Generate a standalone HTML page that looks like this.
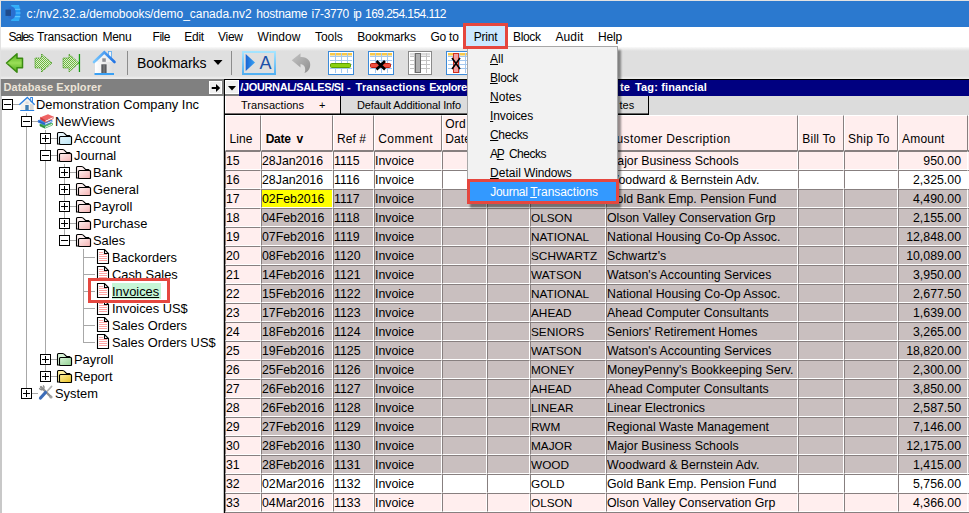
<!DOCTYPE html>
<html><head><meta charset="utf-8"><title>NewViews</title>
<style>
html,body{margin:0;padding:0;}
body{width:969px;height:513px;overflow:hidden;position:relative;background:#fff;font-family:"Liberation Sans",Arial,sans-serif;font-size:12.3px;color:#000;}
.a{position:absolute;white-space:nowrap;}
.c{position:absolute;box-sizing:border-box;font-size:12.33px;line-height:17px;height:19px;white-space:nowrap;overflow:hidden;border-top:1px solid #877f7f;border-left:1px solid #877f7f;border-bottom:1px solid #fff;border-right:1px solid #fff;padding-left:0;padding-top:1px;}
.h{position:absolute;box-sizing:border-box;background:#ffeeee;border-left:1px solid #fff;border-top:1px solid #fff;border-right:1px solid #877f7f;border-bottom:1px solid #877f7f;}
u{text-decoration:underline;}
</style></head><body>

<div class="a" style="left:0;top:0;width:1px;height:79px;background:#e2e2e2;"></div>
<div class="a" style="left:0;top:0;width:969px;height:1px;background:#e2e2e2;"></div>
<div class="a" style="left:1px;top:1px;width:968px;height:26px;background:#2b79cf;"></div>
<div class="a" style="left:26.6px;top:7px;font-size:12px;line-height:15px;letter-spacing:0.054px;color:#fff;">c:/nv2.32.a/</div>
<div class="a" style="left:89.3px;top:7px;font-size:12px;line-height:15px;letter-spacing:-0.116px;color:#fff;">demobooks</div>
<div class="a" style="left:150px;top:7px;font-size:12px;line-height:15px;letter-spacing:-0.030px;color:#fff;">/demo_canada.nv2</div>
<div class="a" style="left:256.3px;top:7px;font-size:12px;line-height:15px;letter-spacing:-0.213px;color:#fff;">hostname</div>
<div class="a" style="left:311.4px;top:7px;font-size:12px;line-height:15px;letter-spacing:-0.362px;color:#fff;">i7-3770</div>
<div class="a" style="left:353.2px;top:7px;font-size:12px;line-height:15px;letter-spacing:-0.922px;color:#fff;">ip</div>
<div class="a" style="left:365px;top:7px;font-size:12px;line-height:15px;letter-spacing:-0.547px;color:#fff;">169.254.154.112</div>
<svg class="a" style="left:4px;top:4px" width="19" height="19" viewBox="4 4 19 19"><defs><linearGradient id="ti" x1="0" y1="0" x2="0" y2="1"><stop offset="0" stop-color="#38b4fa"/><stop offset="0.5" stop-color="#1c8ff0"/><stop offset="1" stop-color="#34b0f8"/></linearGradient></defs><path d="M11 5 H19 Q21.5 13 19 21 H11 Q15 13 11 5 Z" fill="url(#ti)"/><path d="M13.500 9.300 H20.300 M14 13 H20.600 M13.500 16.700 H20.300" stroke="#5cc4ff" stroke-width="1.200"/><ellipse cx="11.500" cy="12.800" rx="4.200" ry="6.300" fill="#2a6fd0"/><rect x="5.500" y="9.600" width="5.500" height="6.300" fill="#1f4b8c"/></svg>
<div class="a" style="left:1px;top:27px;width:968px;height:20px;background:#fff;"></div>
<div class="a" style="left:463px;top:23px;width:45px;height:26px;box-sizing:border-box;border:3px solid #e5473f;background:#cce8ff;z-index:30"></div>
<div class="a" style="left:8.6px;top:30px;font-size:12px;line-height:14px;letter-spacing:-1.126px;">Sales</div>
<div class="a" style="left:37px;top:30px;font-size:12px;line-height:14px;letter-spacing:-0.168px;">Transaction</div>
<div class="a" style="left:102.4px;top:30px;font-size:12px;line-height:14px;letter-spacing:-0.258px;">Menu</div>
<div class="a" style="left:152.6px;top:30px;font-size:12px;line-height:14px;letter-spacing:-0.486px;">File</div>
<div class="a" style="left:184.3px;top:30px;font-size:12px;line-height:14px;letter-spacing:-0.297px;">Edit</div>
<div class="a" style="left:218px;top:30px;font-size:12px;line-height:14px;letter-spacing:-0.274px;">View</div>
<div class="a" style="left:257.6px;top:30px;font-size:12px;line-height:14px;letter-spacing:0.035px;">Window</div>
<div class="a" style="left:315px;top:30px;font-size:12px;line-height:14px;letter-spacing:-0.043px;">Tools</div>
<div class="a" style="left:357.2px;top:30px;font-size:12px;line-height:14px;letter-spacing:-0.159px;">Bookmarks</div>
<div class="a" style="left:430.5px;top:30px;font-size:12px;line-height:14px;letter-spacing:-0.252px;">Go to</div>
<div class="a" style="left:473.7px;top:30px;font-size:12px;line-height:14px;letter-spacing:-0.177px;z-index:31;">Print</div>
<div class="a" style="left:513px;top:30px;font-size:12px;line-height:14px;letter-spacing:-0.329px;">Block</div>
<div class="a" style="left:555.4px;top:30px;font-size:12px;line-height:14px;letter-spacing:0.148px;">Audit</div>
<div class="a" style="left:598px;top:30px;font-size:12px;line-height:14px;letter-spacing:-0.172px;">Help</div>
<div class="a" style="left:1px;top:47px;width:968px;height:32px;background:linear-gradient(#fafafa 0,#dfdfdf 4px,#dfdfdf 29px,#ececec 31px);"></div>
<svg class="a" style="left:0;top:46px" width="480" height="33" viewBox="0 46 480 33">
<defs><linearGradient id="ga" x1="0" y1="0" x2="0" y2="1"><stop offset="0" stop-color="#52b018"/><stop offset="0.5" stop-color="#9ade58"/><stop offset="1" stop-color="#4aa814"/></linearGradient><linearGradient id="gh" x1="0" y1="0" x2="1" y2="0"><stop offset="0" stop-color="#ffffff"/><stop offset="1" stop-color="#dcdcdc"/></linearGradient><linearGradient id="gr" x1="0" y1="0" x2="1" y2="0"><stop offset="0" stop-color="#78c8ff"/><stop offset="1" stop-color="#2274e4"/></linearGradient><linearGradient id="gb" x1="0" y1="0" x2="0" y2="1"><stop offset="0" stop-color="#a4e4ff"/><stop offset="1" stop-color="#52b0f2"/></linearGradient><linearGradient id="gt" x1="0" y1="0" x2="1" y2="0"><stop offset="0" stop-color="#1864d4"/><stop offset="1" stop-color="#3aa4f4"/></linearGradient><linearGradient id="gu" x1="0" y1="0" x2="1" y2="1"><stop offset="0" stop-color="#c4c4c4"/><stop offset="1" stop-color="#8e8e8e"/></linearGradient><pattern id="dots" width="2" height="2" patternUnits="userSpaceOnUse"><rect width="2" height="2" fill="#deecd2"/><rect width="1" height="1" fill="#6cba3c"/><rect x="1" y="1" width="1" height="1" fill="#6cba3c"/></pattern></defs>
<path d="M6.5 63 L17 53.800 V58.300 H22.500 V67.700 H17 V72.200 Z" fill="url(#ga)" stroke="#3a8a12" stroke-width="1.5" stroke-linejoin="round"/>
<path d="M52 63 L41.500 54 V58 H35 V68 H41.500 V72 Z" fill="url(#dots)" stroke="#3c9414" stroke-width="1" stroke-dasharray="1 1"/>
<path d="M79 63 L69 54 V58 H63 V68 H69 V72 Z" fill="url(#dots)" stroke="#3c9414" stroke-width="1" stroke-dasharray="1 1"/>
<rect x="78.800" y="54" width="1.3" height="18" fill="#159a10"/>
<rect x="108.500" y="51.500" width="3" height="8" fill="#f0f4f8" stroke="#58a8f0" stroke-width="0.8"/>
<rect x="95" y="61" width="18.500" height="12.500" fill="url(#gh)"/>
<rect x="94.500" y="73" width="19.500" height="2" fill="#3aa0f4"/>
<path d="M96 62 L104.3 53.500 L112.500 62 Z" fill="#f2f2f2"/>
<path d="M94 62 L104.300 52.300 L114.500 62" fill="none" stroke="url(#gr)" stroke-width="2.6" stroke-linejoin="miter" stroke-linecap="round"/>
<rect x="102.300" y="58.300" width="3.500" height="3.500" fill="#8e9096"/>
<rect x="101.300" y="64.300" width="5.300" height="8.700" fill="#5a5c60"/>
<rect x="103.500" y="64.300" width="1" height="8.700" fill="#8a8a8a"/>
<rect x="127" y="51" width="1" height="24" fill="#8c8c8c"/>
<path d="M213.5 60 H222.5 L218 65 Z" fill="#000"/>
<rect x="231" y="51" width="1" height="24" fill="#8c8c8c"/>
<rect x="243" y="52" width="32" height="22" fill="none" stroke="url(#gb)" stroke-width="2"/>
<path d="M245.700 54 L255 62.500 L245.700 71 Z" fill="url(#gt)"/>
<path d="M291.700 60.200 L300.500 53.200 V57 C307 56.500 311.500 61 310 67 C309 70.500 307 72 304.500 73 C306 70 305.500 64.500 300.500 64 V67.500 Z" fill="url(#gu)"/>
</svg>
<div class="a" style="left:137px;top:54px;font-size:14px;line-height:18px;letter-spacing:-0.059px;">Bookmarks</div>
<div class="a" style="left:259.5px;top:52.5px;font-size:18px;line-height:20px;color:#1c50a8;">A</div>
<svg class="a" style="left:328px;top:51px" width="26" height="24" viewBox="0 0 26 24"><rect x="0.5" y="0.5" width="25" height="23" fill="#fff" stroke="#3b8ad8" stroke-width="1"/><rect x="2" y="2" width="22" height="2.500" fill="#f8c848"/><path d="M2 5.5 H24" stroke="#a4c8ee" stroke-width="1"/><path d="M2 9.5 H24" stroke="#a4c8ee" stroke-width="1"/><path d="M2 13.5 H24" stroke="#a4c8ee" stroke-width="1"/><path d="M2 17.5 H24" stroke="#a4c8ee" stroke-width="1"/><path d="M7.5 2 V22" stroke="#a4c8ee" stroke-width="1"/><path d="M13.5 2 V22" stroke="#a4c8ee" stroke-width="1"/><path d="M19.5 2 V22" stroke="#a4c8ee" stroke-width="1"/><rect x="2.5" y="12.5" width="20" height="4" rx="1" fill="#8cd010" stroke="#5ca000" stroke-width="1"/></svg>
<svg class="a" style="left:368px;top:51px" width="26" height="24" viewBox="0 0 26 24"><rect x="0.5" y="0.5" width="25" height="23" fill="#fff" stroke="#3b8ad8" stroke-width="1"/><rect x="2" y="2" width="22" height="2.500" fill="#f8c848"/><path d="M2 5.5 H24" stroke="#a4c8ee" stroke-width="1"/><path d="M2 9.5 H24" stroke="#a4c8ee" stroke-width="1"/><path d="M2 13.5 H24" stroke="#a4c8ee" stroke-width="1"/><path d="M2 17.5 H24" stroke="#a4c8ee" stroke-width="1"/><path d="M7.5 2 V22" stroke="#a4c8ee" stroke-width="1"/><path d="M13.5 2 V22" stroke="#a4c8ee" stroke-width="1"/><path d="M19.5 2 V22" stroke="#a4c8ee" stroke-width="1"/><rect x="2.5" y="12.5" width="20" height="4" rx="1" fill="#f05040" stroke="#c02010" stroke-width="1"/><path d="M8.500 10 L17 18.500 M17 10 L8.500 18.500" stroke="#000" stroke-width="2.6"/></svg>
<svg class="a" style="left:408px;top:51px" width="24" height="24" viewBox="0 0 24 24"><rect x="0.5" y="0.5" width="23" height="23" fill="#fff" stroke="#8a8a8a" stroke-width="1"/><rect x="2" y="2" width="20" height="2.500" fill="#dcdcdc"/><path d="M2 5.5 H22" stroke="#c4c4c4" stroke-width="1"/><path d="M2 9.5 H22" stroke="#c4c4c4" stroke-width="1"/><path d="M2 13.5 H22" stroke="#c4c4c4" stroke-width="1"/><path d="M2 17.5 H22" stroke="#c4c4c4" stroke-width="1"/><path d="M6.5 2 V22" stroke="#c4c4c4" stroke-width="1"/><path d="M12.5 2 V22" stroke="#c4c4c4" stroke-width="1"/><path d="M18.5 2 V22" stroke="#c4c4c4" stroke-width="1"/><rect x="7.500" y="2.500" width="5" height="19" fill="#b0b0b0" stroke="#6a6a6a" stroke-width="1"/></svg>
<svg class="a" style="left:446px;top:51px" width="26" height="24" viewBox="0 0 26 24"><rect x="0.5" y="0.5" width="25" height="23" fill="#fff" stroke="#3b8ad8" stroke-width="1"/><rect x="2" y="2" width="22" height="2.500" fill="#f8c848"/><path d="M2 5.5 H24" stroke="#a4c8ee" stroke-width="1"/><path d="M2 9.5 H24" stroke="#a4c8ee" stroke-width="1"/><path d="M2 13.5 H24" stroke="#a4c8ee" stroke-width="1"/><path d="M2 17.5 H24" stroke="#a4c8ee" stroke-width="1"/><path d="M7.5 2 V22" stroke="#a4c8ee" stroke-width="1"/><path d="M13.5 2 V22" stroke="#a4c8ee" stroke-width="1"/><path d="M19.5 2 V22" stroke="#a4c8ee" stroke-width="1"/><rect x="7.500" y="2.500" width="5" height="19" fill="#f0a0a0" stroke="#d03020" stroke-width="1"/><path d="M6 7 L14 18 M14 7 L6 18" stroke="#000" stroke-width="1.6"/></svg>
<div class="a" style="left:0;top:79px;width:2px;height:434px;background:#c8c8c8;"></div>
<div class="a" style="left:1px;top:79px;width:222px;height:17px;background:#808080;"></div>
<div class="a" style="left:3.5px;top:81px;font-size:11px;line-height:13px;letter-spacing:0.088px;color:#ece4d8;font-weight:bold;">Database Explorer</div>
<div class="a" style="left:209px;top:81px;width:13px;height:13px;background:#f0f0f0;box-sizing:border-box;border:1px solid #fff;"></div>
<svg class="a" style="left:209px;top:81px" width="13" height="13" viewBox="0 0 13 13"><path d="M2.700 7 H8" stroke="#000" stroke-width="2"/><path d="M7 3 L11.200 7 L7 11 Z" fill="#000"/></svg>
<div class="a" style="left:222px;top:79px;width:2px;height:17px;background:#808080;"></div>
<div class="a" style="left:223px;top:96px;width:1px;height:417px;background:#c4c4c4;"></div>
<div class="a" style="left:224px;top:79px;width:1px;height:434px;background:#000;"></div>
<svg class="a" style="left:0;top:96px" width="222" height="417" viewBox="0 0 222 417" shape-rendering="crispEdges"><rect x="26" y="17" width="1" height="281" fill="#a8a8a8"/><rect x="45" y="34" width="1" height="247" fill="#a8a8a8"/><rect x="64" y="68" width="1" height="77" fill="#a8a8a8"/><rect x="83" y="153" width="1" height="94" fill="#a8a8a8"/><rect x="7" y="8" width="12" height="1" fill="#a8a8a8"/><rect x="2.5" y="3.5" width="10" height="10" fill="#fff" stroke="#000" stroke-width="1"/><rect x="4" y="8" width="7" height="1" fill="#000"/><rect x="26" y="25" width="12" height="1" fill="#a8a8a8"/><rect x="21.5" y="20.5" width="10" height="10" fill="#fff" stroke="#000" stroke-width="1"/><rect x="23" y="25" width="7" height="1" fill="#000"/><rect x="45" y="42" width="12" height="1" fill="#a8a8a8"/><rect x="40.5" y="37.5" width="10" height="10" fill="#fff" stroke="#000" stroke-width="1"/><rect x="42" y="42" width="7" height="1" fill="#000"/><rect x="45" y="39" width="1" height="7" fill="#000"/><rect x="45" y="59" width="12" height="1" fill="#a8a8a8"/><rect x="40.5" y="54.5" width="10" height="10" fill="#fff" stroke="#000" stroke-width="1"/><rect x="42" y="59" width="7" height="1" fill="#000"/><rect x="64" y="76" width="12" height="1" fill="#a8a8a8"/><rect x="59.5" y="71.5" width="10" height="10" fill="#fff" stroke="#000" stroke-width="1"/><rect x="61" y="76" width="7" height="1" fill="#000"/><rect x="64" y="73" width="1" height="7" fill="#000"/><rect x="64" y="93" width="12" height="1" fill="#a8a8a8"/><rect x="59.5" y="88.5" width="10" height="10" fill="#fff" stroke="#000" stroke-width="1"/><rect x="61" y="93" width="7" height="1" fill="#000"/><rect x="64" y="90" width="1" height="7" fill="#000"/><rect x="64" y="110" width="12" height="1" fill="#a8a8a8"/><rect x="59.5" y="105.5" width="10" height="10" fill="#fff" stroke="#000" stroke-width="1"/><rect x="61" y="110" width="7" height="1" fill="#000"/><rect x="64" y="107" width="1" height="7" fill="#000"/><rect x="64" y="127" width="12" height="1" fill="#a8a8a8"/><rect x="59.5" y="122.5" width="10" height="10" fill="#fff" stroke="#000" stroke-width="1"/><rect x="61" y="127" width="7" height="1" fill="#000"/><rect x="64" y="124" width="1" height="7" fill="#000"/><rect x="64" y="144" width="12" height="1" fill="#a8a8a8"/><rect x="59.5" y="139.5" width="10" height="10" fill="#fff" stroke="#000" stroke-width="1"/><rect x="61" y="144" width="7" height="1" fill="#000"/><rect x="83" y="161" width="12" height="1" fill="#a8a8a8"/><rect x="83" y="178" width="12" height="1" fill="#a8a8a8"/><rect x="83" y="195" width="12" height="1" fill="#a8a8a8"/><rect x="83" y="212" width="12" height="1" fill="#a8a8a8"/><rect x="83" y="229" width="12" height="1" fill="#a8a8a8"/><rect x="83" y="246" width="12" height="1" fill="#a8a8a8"/><rect x="45" y="263" width="12" height="1" fill="#a8a8a8"/><rect x="40.5" y="258.5" width="10" height="10" fill="#fff" stroke="#000" stroke-width="1"/><rect x="42" y="263" width="7" height="1" fill="#000"/><rect x="45" y="260" width="1" height="7" fill="#000"/><rect x="45" y="280" width="12" height="1" fill="#a8a8a8"/><rect x="40.5" y="275.5" width="10" height="10" fill="#fff" stroke="#000" stroke-width="1"/><rect x="42" y="280" width="7" height="1" fill="#000"/><rect x="45" y="277" width="1" height="7" fill="#000"/><rect x="26" y="297" width="12" height="1" fill="#a8a8a8"/><rect x="21.5" y="292.5" width="10" height="10" fill="#fff" stroke="#000" stroke-width="1"/><rect x="23" y="297" width="7" height="1" fill="#000"/><rect x="26" y="294" width="1" height="7" fill="#000"/></svg>
<svg class="a" style="left:18px;top:96px" width="18" height="16" viewBox="18 96 18 16"><rect x="30.700" y="97.500" width="1.800" height="4.500" fill="#fff" stroke="#2a80e0" stroke-width="0.900"/><path d="M20.700 104.500 L27.300 98.500 L33.600 104.500 V110 H20.700 Z" fill="#f4f2ee"/><path d="M30 104 V110 H33.600 V104.500 Z" fill="#d8d8d8"/><path d="M19.300 104.700 L27.300 97.400 L34.700 104.700" fill="none" stroke="#2a80e0" stroke-width="1.300" stroke-linejoin="miter"/><rect x="25.300" y="105" width="3.400" height="5" fill="#3f7fb4"/><rect x="25.600" y="101.500" width="3" height="2.300" fill="#dcdcdc"/><rect x="20.200" y="110" width="14" height="1" fill="#2a80e0"/></svg>
<div class="a" style="left:36px;top:96px;font-size:12.86px;line-height:17px;">Demonstration Company Inc</div>
<svg class="a" style="left:37px;top:113px" width="18" height="16" viewBox="37 113 18 16"><path d="M40 124 L45 126.500 L52.500 123.300 V125 L45 128.200 L40 126 Z" fill="#fff" stroke="#38a848" stroke-width="0.700"/><path d="M40 124 L47 121.500 L52.500 123.300 L45 126.500 Z" fill="#44b858"/><path d="M40 124 L45 126.500 V128.200 L40 126 Z" fill="#2c9040"/><path d="M38.300 120.300 L45 123.300 L52 120.300 V122 L45 125 L38.300 122.300 Z" fill="#fff" stroke="#2a70d8" stroke-width="0.700"/><path d="M38.300 120.300 L45 117.500 L52 120.300 L45 123.300 Z" fill="#3a84e8"/><path d="M38.300 120.300 L45 123.300 V125 L38.300 122.300 Z" fill="#2464c8"/><path d="M40.500 117.300 L45.500 120.300 L53.200 116.600 V118.600 L45.500 122.300 L40.500 119.300 Z" fill="#fff" stroke="#d84040" stroke-width="0.700"/><path d="M40.500 117.300 L48 114.300 L53.200 116.600 L45.500 120.300 Z" fill="#f06464"/><path d="M40.500 117.300 L45.500 120.300 V122.300 L40.500 119.300 Z" fill="#d03838"/></svg>
<div class="a" style="left:55px;top:113px;font-size:12.86px;line-height:17px;">NewViews</div>
<svg class="a" style="left:56px;top:131px" width="17" height="15" viewBox="0 0 17 15"><defs><linearGradient id="g2" x1="0" y1="0" x2="1" y2="1"><stop offset="0" stop-color="#e8f8ff"/><stop offset="1" stop-color="#b8e4f4"/></linearGradient></defs><path d="M1.5 13 V2.5 Q1.5 1.5 2.5 1.5 H6.5 Q8 1.5 9 3 L10.5 4.500 H13.500 L15.500 6.500 V13 Z" fill="#e8f8ff" stroke="#000" stroke-width="1.1"/><rect x="3.5" y="5.5" width="12" height="8" rx="1" fill="url(#g2)" stroke="#000" stroke-width="1.1"/></svg>
<div class="a" style="left:74px;top:130px;font-size:12.86px;line-height:17px;">Account</div>
<svg class="a" style="left:56px;top:148px" width="17" height="15" viewBox="0 0 17 15"><defs><linearGradient id="g3" x1="0" y1="0" x2="1" y2="1"><stop offset="0" stop-color="#fff0f0"/><stop offset="1" stop-color="#f4b0b0"/></linearGradient></defs><path d="M1.5 13 V2.5 Q1.5 1.5 2.5 1.5 H6.5 Q8 1.5 9 3 L10.5 4.500 H13.500 L15.500 6.500 V13 Z" fill="#fff0f0" stroke="#000" stroke-width="1.1"/><rect x="3.5" y="5.5" width="12" height="8" rx="1" fill="url(#g3)" stroke="#000" stroke-width="1.1"/></svg>
<div class="a" style="left:74px;top:147px;font-size:12.86px;line-height:17px;">Journal</div>
<svg class="a" style="left:75px;top:165px" width="17" height="15" viewBox="0 0 17 15"><defs><linearGradient id="g4" x1="0" y1="0" x2="1" y2="1"><stop offset="0" stop-color="#fff0f0"/><stop offset="1" stop-color="#f4b0b0"/></linearGradient></defs><path d="M1.5 13 V2.5 Q1.5 1.5 2.5 1.5 H6.5 Q8 1.5 9 3 L10.5 4.500 H13.500 L15.500 6.500 V13 Z" fill="#fff0f0" stroke="#000" stroke-width="1.1"/><rect x="3.5" y="5.5" width="12" height="8" rx="1" fill="url(#g4)" stroke="#000" stroke-width="1.1"/></svg>
<div class="a" style="left:93px;top:164px;font-size:12.86px;line-height:17px;">Bank</div>
<svg class="a" style="left:75px;top:182px" width="17" height="15" viewBox="0 0 17 15"><defs><linearGradient id="g5" x1="0" y1="0" x2="1" y2="1"><stop offset="0" stop-color="#fff0f0"/><stop offset="1" stop-color="#f4b0b0"/></linearGradient></defs><path d="M1.5 13 V2.5 Q1.5 1.5 2.5 1.5 H6.5 Q8 1.5 9 3 L10.5 4.500 H13.500 L15.500 6.500 V13 Z" fill="#fff0f0" stroke="#000" stroke-width="1.1"/><rect x="3.5" y="5.5" width="12" height="8" rx="1" fill="url(#g5)" stroke="#000" stroke-width="1.1"/></svg>
<div class="a" style="left:93px;top:181px;font-size:12.86px;line-height:17px;">General</div>
<svg class="a" style="left:75px;top:199px" width="17" height="15" viewBox="0 0 17 15"><defs><linearGradient id="g6" x1="0" y1="0" x2="1" y2="1"><stop offset="0" stop-color="#fff0f0"/><stop offset="1" stop-color="#f4b0b0"/></linearGradient></defs><path d="M1.5 13 V2.5 Q1.5 1.5 2.5 1.5 H6.5 Q8 1.5 9 3 L10.5 4.500 H13.500 L15.500 6.500 V13 Z" fill="#fff0f0" stroke="#000" stroke-width="1.1"/><rect x="3.5" y="5.5" width="12" height="8" rx="1" fill="url(#g6)" stroke="#000" stroke-width="1.1"/></svg>
<div class="a" style="left:93px;top:198px;font-size:12.86px;line-height:17px;">Payroll</div>
<svg class="a" style="left:75px;top:216px" width="17" height="15" viewBox="0 0 17 15"><defs><linearGradient id="g7" x1="0" y1="0" x2="1" y2="1"><stop offset="0" stop-color="#fff0f0"/><stop offset="1" stop-color="#f4b0b0"/></linearGradient></defs><path d="M1.5 13 V2.5 Q1.5 1.5 2.5 1.5 H6.5 Q8 1.5 9 3 L10.5 4.500 H13.500 L15.500 6.500 V13 Z" fill="#fff0f0" stroke="#000" stroke-width="1.1"/><rect x="3.5" y="5.5" width="12" height="8" rx="1" fill="url(#g7)" stroke="#000" stroke-width="1.1"/></svg>
<div class="a" style="left:93px;top:215px;font-size:12.86px;line-height:17px;">Purchase</div>
<svg class="a" style="left:75px;top:233px" width="17" height="15" viewBox="0 0 17 15"><defs><linearGradient id="g8" x1="0" y1="0" x2="1" y2="1"><stop offset="0" stop-color="#fff0f0"/><stop offset="1" stop-color="#f4b0b0"/></linearGradient></defs><path d="M1.5 13 V2.5 Q1.5 1.5 2.5 1.5 H6.5 Q8 1.5 9 3 L10.5 4.500 H13.500 L15.500 6.500 V13 Z" fill="#fff0f0" stroke="#000" stroke-width="1.1"/><rect x="3.5" y="5.5" width="12" height="8" rx="1" fill="url(#g8)" stroke="#000" stroke-width="1.1"/></svg>
<div class="a" style="left:93px;top:232px;font-size:12.86px;line-height:17px;">Sales</div>
<svg class="a" style="left:96px;top:249px" width="14" height="16" viewBox="0 0 14 16"><path d="M1.500 0.5 H8.5 L12.5 4.500 V14.500 H1.500 Z" fill="#fff" stroke="#000" stroke-width="1.1"/><path d="M8.5 0.5 V4.5 H12.500" fill="none" stroke="#000" stroke-width="1.1"/><path d="M3 3.5 H7" stroke="#ffa4a4" stroke-width="1"/><path d="M3 5.5 H11" stroke="#ffa4a4" stroke-width="1"/><path d="M3 7.5 H11" stroke="#ffa4a4" stroke-width="1"/><path d="M3 9.5 H11" stroke="#ffa4a4" stroke-width="1"/><path d="M3 11.5 H11" stroke="#ffa4a4" stroke-width="1"/></svg>
<div class="a" style="left:112px;top:249px;font-size:12.86px;line-height:17px;">Backorders</div>
<svg class="a" style="left:96px;top:266px" width="14" height="16" viewBox="0 0 14 16"><path d="M1.500 0.5 H8.5 L12.5 4.500 V14.500 H1.500 Z" fill="#fff" stroke="#000" stroke-width="1.1"/><path d="M8.5 0.5 V4.5 H12.500" fill="none" stroke="#000" stroke-width="1.1"/><path d="M3 3.5 H7" stroke="#ffa4a4" stroke-width="1"/><path d="M3 5.5 H11" stroke="#ffa4a4" stroke-width="1"/><path d="M3 7.5 H11" stroke="#ffa4a4" stroke-width="1"/><path d="M3 9.5 H11" stroke="#ffa4a4" stroke-width="1"/><path d="M3 11.5 H11" stroke="#ffa4a4" stroke-width="1"/></svg>
<div class="a" style="left:112px;top:266px;font-size:12.86px;line-height:17px;">Cash Sales</div>
<svg class="a" style="left:96px;top:283px" width="14" height="16" viewBox="0 0 14 16"><path d="M1.500 0.5 H8.5 L12.5 4.500 V14.500 H1.500 Z" fill="#fff" stroke="#000" stroke-width="1.1"/><path d="M8.5 0.5 V4.5 H12.500" fill="none" stroke="#000" stroke-width="1.1"/><path d="M3 3.5 H7" stroke="#ffa4a4" stroke-width="1"/><path d="M3 5.5 H11" stroke="#ffa4a4" stroke-width="1"/><path d="M3 7.5 H11" stroke="#ffa4a4" stroke-width="1"/><path d="M3 9.5 H11" stroke="#ffa4a4" stroke-width="1"/><path d="M3 11.5 H11" stroke="#ffa4a4" stroke-width="1"/></svg>
<div class="a" style="left:112px;top:283px;width:49px;height:16px;background:#c6f6d6;"></div>
<div class="a" style="left:112px;top:283px;font-size:12.86px;line-height:17px;text-decoration:underline;">Invoices</div>
<svg class="a" style="left:96px;top:300px" width="14" height="16" viewBox="0 0 14 16"><path d="M1.500 0.5 H8.5 L12.5 4.500 V14.500 H1.500 Z" fill="#fff" stroke="#000" stroke-width="1.1"/><path d="M8.5 0.5 V4.5 H12.500" fill="none" stroke="#000" stroke-width="1.1"/><path d="M3 3.5 H7" stroke="#ffa4a4" stroke-width="1"/><path d="M3 5.5 H11" stroke="#ffa4a4" stroke-width="1"/><path d="M3 7.5 H11" stroke="#ffa4a4" stroke-width="1"/><path d="M3 9.5 H11" stroke="#ffa4a4" stroke-width="1"/><path d="M3 11.5 H11" stroke="#ffa4a4" stroke-width="1"/></svg>
<div class="a" style="left:112px;top:300px;font-size:12.86px;line-height:17px;">Invoices US$</div>
<svg class="a" style="left:96px;top:317px" width="14" height="16" viewBox="0 0 14 16"><path d="M1.500 0.5 H8.5 L12.5 4.500 V14.500 H1.500 Z" fill="#fff" stroke="#000" stroke-width="1.1"/><path d="M8.5 0.5 V4.5 H12.500" fill="none" stroke="#000" stroke-width="1.1"/><path d="M3 3.5 H7" stroke="#ffa4a4" stroke-width="1"/><path d="M3 5.5 H11" stroke="#ffa4a4" stroke-width="1"/><path d="M3 7.5 H11" stroke="#ffa4a4" stroke-width="1"/><path d="M3 9.5 H11" stroke="#ffa4a4" stroke-width="1"/><path d="M3 11.5 H11" stroke="#ffa4a4" stroke-width="1"/></svg>
<div class="a" style="left:112px;top:317px;font-size:12.86px;line-height:17px;">Sales Orders</div>
<svg class="a" style="left:96px;top:334px" width="14" height="16" viewBox="0 0 14 16"><path d="M1.500 0.5 H8.5 L12.5 4.500 V14.500 H1.500 Z" fill="#fff" stroke="#000" stroke-width="1.1"/><path d="M8.5 0.5 V4.5 H12.500" fill="none" stroke="#000" stroke-width="1.1"/><path d="M3 3.5 H7" stroke="#ffa4a4" stroke-width="1"/><path d="M3 5.5 H11" stroke="#ffa4a4" stroke-width="1"/><path d="M3 7.5 H11" stroke="#ffa4a4" stroke-width="1"/><path d="M3 9.5 H11" stroke="#ffa4a4" stroke-width="1"/><path d="M3 11.5 H11" stroke="#ffa4a4" stroke-width="1"/></svg>
<div class="a" style="left:112px;top:334px;font-size:12.86px;line-height:17px;">Sales Orders US$</div>
<svg class="a" style="left:56px;top:352px" width="17" height="15" viewBox="0 0 17 15"><defs><linearGradient id="g15" x1="0" y1="0" x2="1" y2="1"><stop offset="0" stop-color="#d8f4d8"/><stop offset="1" stop-color="#90d090"/></linearGradient></defs><path d="M1.5 13 V2.5 Q1.5 1.5 2.5 1.5 H6.5 Q8 1.5 9 3 L10.5 4.500 H13.500 L15.500 6.500 V13 Z" fill="#d8f4d8" stroke="#000" stroke-width="1.1"/><rect x="3.5" y="5.5" width="12" height="8" rx="1" fill="url(#g15)" stroke="#000" stroke-width="1.1"/></svg>
<div class="a" style="left:74px;top:351px;font-size:12.86px;line-height:17px;">Payroll</div>
<svg class="a" style="left:56px;top:369px" width="17" height="15" viewBox="0 0 17 15"><defs><linearGradient id="g16" x1="0" y1="0" x2="1" y2="1"><stop offset="0" stop-color="#fff0a0"/><stop offset="1" stop-color="#e8c020"/></linearGradient></defs><path d="M1.5 13 V2.5 Q1.5 1.5 2.5 1.5 H6.5 Q8 1.5 9 3 L10.5 4.500 H13.500 L15.500 6.500 V13 Z" fill="#fff0a0" stroke="#000" stroke-width="1.1"/><rect x="3.5" y="5.5" width="12" height="8" rx="1" fill="url(#g16)" stroke="#000" stroke-width="1.1"/></svg>
<div class="a" style="left:74px;top:368px;font-size:12.86px;line-height:17px;">Report</div>
<svg class="a" style="left:38px;top:384px" width="16" height="17" viewBox="38 384 16 17"><path d="M41 387 L50.500 396.500" stroke="#909090" stroke-width="2.400" stroke-linecap="round"/><path d="M39.500 388 A2.300 2.300 0 1 0 43 385.500" fill="none" stroke="#8a8a8a" stroke-width="1.400"/><circle cx="51" cy="397" r="1.600" fill="#a0a0a0"/><path d="M51.500 386.500 L46 392.500" stroke="#b0b0b0" stroke-width="1.800" stroke-linecap="round"/><path d="M45.500 392.500 L40.500 398" stroke="#3c6cb8" stroke-width="3.200" stroke-linecap="round"/></svg>
<div class="a" style="left:55px;top:385px;font-size:12.86px;line-height:17px;">System</div>
<div class="a" style="left:88px;top:278px;width:82px;height:25px;box-sizing:border-box;border:3px solid #e5473f;"></div>
<div class="a" style="left:225px;top:79px;width:744px;height:17px;background:#000080;border-top:1px solid #000;box-sizing:border-box;"></div>
<div class="a" style="left:225px;top:80px;width:14px;height:16px;background:#808080;"></div>
<div class="a" style="left:225px;top:80px;width:14px;height:14px;background:#f0f0f0;box-sizing:border-box;border:1px solid #fff;"></div>
<svg class="a" style="left:225px;top:80px" width="14" height="14" viewBox="0 0 14 14"><path d="M3 6 H11 L7 10.500 Z" fill="#000"/></svg>
<div class="a" style="left:240.3px;top:81px;font-size:11px;line-height:13px;letter-spacing:-0.365px;color:#fff;font-weight:bold;">/JOURNAL/SALES/SI</div>
<div class="a" style="left:347.1px;top:81px;font-size:11px;line-height:13px;letter-spacing:0.728px;color:#fff;font-weight:bold;">-</div>
<div class="a" style="left:355.6px;top:81px;font-size:11px;line-height:13px;letter-spacing:0.178px;color:#fff;font-weight:bold;">Transactions</div>
<div class="a" style="left:429.2px;top:81px;font-size:11px;line-height:13px;letter-spacing:-0.418px;color:#fff;font-weight:bold;">Explorer</div>
<div class="a" style="left:620px;top:81px;font-size:11px;line-height:13px;color:#fff;font-weight:bold;">te</div>
<div class="a" style="left:635px;top:81px;font-size:11px;line-height:13px;letter-spacing:0.136px;color:#fff;font-weight:bold;">Tag: financial</div>
<div class="a" style="left:225px;top:96px;width:744px;height:19px;background:#dcdcdc;"></div>
<div class="a" style="left:225px;top:96px;width:115px;height:19px;background:#ffeeee;border-left:1px solid #fff;box-sizing:border-box;"></div>
<div class="a" style="left:340px;top:96px;width:309px;height:19px;box-sizing:border-box;border-left:1px solid #000;border-right:1px solid #000;"></div>
<div class="a" style="left:225px;top:113px;width:424px;height:2px;background:linear-gradient(rgba(0,0,0,0.55) 0,rgba(0,0,0,0.55) 1px,#000 1px);"></div>
<div class="a" style="left:241px;top:98px;font-size:11px;line-height:14px;letter-spacing:0.036px;">Transactions</div>
<div class="a" style="left:319px;top:98px;font-size:11px;line-height:14px;">+</div>
<div class="a" style="left:357px;top:98px;font-size:11px;line-height:14px;letter-spacing:-0.132px;">Default Additional Info</div>
<div class="a" style="left:619.5px;top:98px;font-size:11px;line-height:14px;">tes</div>
<div class="a" style="left:225px;top:115px;width:744px;height:398px;background:#ffeeee;"></div>
<div class="h" style="left:225px;top:115px;width:36px;height:36px;"></div>
<div class="a" style="left:229.5px;top:132px;font-size:12px;line-height:15px;letter-spacing:0.078px;">Line</div>
<div class="h" style="left:261px;top:115px;width:72px;height:36px;"></div>
<div class="a" style="left:265.7px;top:132px;font-size:12px;line-height:15px;letter-spacing:-0.294px;"><b>Date&nbsp; v</b></div>
<div class="h" style="left:333px;top:115px;width:41px;height:36px;"></div>
<div class="a" style="left:337.1px;top:132px;font-size:12px;line-height:15px;letter-spacing:0.022px;">Ref #</div>
<div class="h" style="left:374px;top:115px;width:68px;height:36px;"></div>
<div class="a" style="left:378.3px;top:132px;font-size:12px;line-height:15px;letter-spacing:0.398px;">Comment</div>
<div class="h" style="left:442px;top:115px;width:45px;height:36px;"></div>
<div class="h" style="left:487px;top:115px;width:43px;height:36px;"></div>
<div class="h" style="left:530px;top:115px;width:76px;height:36px;"></div>
<div class="a" style="left:535px;top:132px;font-size:12px;line-height:15px;letter-spacing:0.123px;">Customer</div>
<div class="h" style="left:606px;top:115px;width:192px;height:36px;"></div>
<div class="a" style="left:607.5px;top:132px;font-size:12px;line-height:15px;letter-spacing:0.381px;">Customer Description</div>
<div class="h" style="left:798px;top:115px;width:46px;height:36px;"></div>
<div class="a" style="left:802.3px;top:132px;font-size:12px;line-height:15px;letter-spacing:0.229px;">Bill To</div>
<div class="h" style="left:844px;top:115px;width:54px;height:36px;"></div>
<div class="a" style="left:848.1px;top:132px;font-size:12px;line-height:15px;letter-spacing:0.241px;">Ship To</div>
<div class="h" style="left:898px;top:115px;width:70px;height:36px;"></div>
<div class="a" style="left:902px;top:132px;font-size:12px;line-height:15px;letter-spacing:0.207px;">Amount</div>
<div class="h" style="left:968px;top:115px;width:1px;height:36px;border:0;border-top:1px solid #fff;border-bottom:1px solid #877f7f;"></div>
<div class="a" style="left:445.2px;top:117px;font-size:12px;line-height:15px;letter-spacing:0.261px;">Ord</div>
<div class="a" style="left:445.2px;top:132px;font-size:12px;line-height:15px;letter-spacing:0.110px;">Date</div>
<div class="c" style="left:225px;top:151px;width:36px;background:#ffeeee;">15</div>
<div class="c" style="left:261px;top:151px;width:72px;background:#ffeeee;">28Jan2016</div>
<div class="c" style="left:333px;top:151px;width:41px;background:#ffeeee;">1115</div>
<div class="c" style="left:374px;top:151px;width:68px;background:#ffeeee;">Invoice</div>
<div class="c" style="left:442px;top:151px;width:45px;background:#ffeeee;"></div>
<div class="c" style="left:487px;top:151px;width:43px;background:#ffeeee;"></div>
<div class="c" style="left:530px;top:151px;width:76px;background:#ffeeee;font-size:11.8px;">MAJOR</div>
<div class="c" style="left:606px;top:151px;width:192px;background:#ffeeee;">Major Business Schools</div>
<div class="c" style="left:798px;top:151px;width:46px;background:#ffeeee;"></div>
<div class="c" style="left:844px;top:151px;width:54px;background:#ffeeee;"></div>
<div class="c" style="left:898px;top:151px;width:70px;background:#ffeeee;text-align:right;padding-right:6px;">950.00</div>
<div class="c" style="left:968px;top:151px;width:1px;background:#ffeeee;border-left:0;border-right:0;"></div>
<div class="c" style="left:225px;top:170px;width:36px;background:#ffeeee;">16</div>
<div class="c" style="left:261px;top:170px;width:72px;background:#ffffff;">28Jan2016</div>
<div class="c" style="left:333px;top:170px;width:41px;background:#ffffff;">1116</div>
<div class="c" style="left:374px;top:170px;width:68px;background:#ffffff;">Invoice</div>
<div class="c" style="left:442px;top:170px;width:45px;background:#ffffff;"></div>
<div class="c" style="left:487px;top:170px;width:43px;background:#ffffff;"></div>
<div class="c" style="left:530px;top:170px;width:76px;background:#ffffff;font-size:11.8px;">WOOD</div>
<div class="c" style="left:606px;top:170px;width:192px;background:#ffffff;">Woodward &amp; Bernstein Adv.</div>
<div class="c" style="left:798px;top:170px;width:46px;background:#ffffff;"></div>
<div class="c" style="left:844px;top:170px;width:54px;background:#ffffff;"></div>
<div class="c" style="left:898px;top:170px;width:70px;background:#ffffff;text-align:right;padding-right:6px;">2,325.00</div>
<div class="c" style="left:968px;top:170px;width:1px;background:#ffffff;border-left:0;border-right:0;"></div>
<div class="c" style="left:225px;top:189px;width:36px;background:#ffeeee;">17</div>
<div class="c" style="left:261px;top:189px;width:72px;background:#ffff00;">02Feb2016</div>
<div class="c" style="left:333px;top:189px;width:41px;background:#c9bfbf;">1117</div>
<div class="c" style="left:374px;top:189px;width:68px;background:#c9bfbf;">Invoice</div>
<div class="c" style="left:442px;top:189px;width:45px;background:#c9bfbf;"></div>
<div class="c" style="left:487px;top:189px;width:43px;background:#c9bfbf;"></div>
<div class="c" style="left:530px;top:189px;width:76px;background:#c9bfbf;font-size:11.8px;">GOLD</div>
<div class="c" style="left:606px;top:189px;width:192px;background:#c9bfbf;">Gold Bank Emp. Pension Fund</div>
<div class="c" style="left:798px;top:189px;width:46px;background:#c9bfbf;"></div>
<div class="c" style="left:844px;top:189px;width:54px;background:#c9bfbf;"></div>
<div class="c" style="left:898px;top:189px;width:70px;background:#c9bfbf;text-align:right;padding-right:6px;">4,490.00</div>
<div class="c" style="left:968px;top:189px;width:1px;background:#c9bfbf;border-left:0;border-right:0;"></div>
<div class="c" style="left:225px;top:208px;width:36px;background:#ffeeee;">18</div>
<div class="c" style="left:261px;top:208px;width:72px;background:#c9bfbf;">04Feb2016</div>
<div class="c" style="left:333px;top:208px;width:41px;background:#c9bfbf;">1118</div>
<div class="c" style="left:374px;top:208px;width:68px;background:#c9bfbf;">Invoice</div>
<div class="c" style="left:442px;top:208px;width:45px;background:#c9bfbf;"></div>
<div class="c" style="left:487px;top:208px;width:43px;background:#c9bfbf;"></div>
<div class="c" style="left:530px;top:208px;width:76px;background:#c9bfbf;font-size:11.8px;">OLSON</div>
<div class="c" style="left:606px;top:208px;width:192px;background:#c9bfbf;">Olson Valley Conservation Grp</div>
<div class="c" style="left:798px;top:208px;width:46px;background:#c9bfbf;"></div>
<div class="c" style="left:844px;top:208px;width:54px;background:#c9bfbf;"></div>
<div class="c" style="left:898px;top:208px;width:70px;background:#c9bfbf;text-align:right;padding-right:6px;">2,155.00</div>
<div class="c" style="left:968px;top:208px;width:1px;background:#c9bfbf;border-left:0;border-right:0;"></div>
<div class="c" style="left:225px;top:227px;width:36px;background:#ffeeee;">19</div>
<div class="c" style="left:261px;top:227px;width:72px;background:#c9bfbf;">07Feb2016</div>
<div class="c" style="left:333px;top:227px;width:41px;background:#c9bfbf;">1119</div>
<div class="c" style="left:374px;top:227px;width:68px;background:#c9bfbf;">Invoice</div>
<div class="c" style="left:442px;top:227px;width:45px;background:#c9bfbf;"></div>
<div class="c" style="left:487px;top:227px;width:43px;background:#c9bfbf;"></div>
<div class="c" style="left:530px;top:227px;width:76px;background:#c9bfbf;font-size:11.8px;">NATIONAL</div>
<div class="c" style="left:606px;top:227px;width:192px;background:#c9bfbf;">National Housing Co-Op Assoc.</div>
<div class="c" style="left:798px;top:227px;width:46px;background:#c9bfbf;"></div>
<div class="c" style="left:844px;top:227px;width:54px;background:#c9bfbf;"></div>
<div class="c" style="left:898px;top:227px;width:70px;background:#c9bfbf;text-align:right;padding-right:6px;">12,848.00</div>
<div class="c" style="left:968px;top:227px;width:1px;background:#c9bfbf;border-left:0;border-right:0;"></div>
<div class="c" style="left:225px;top:246px;width:36px;background:#ffeeee;">20</div>
<div class="c" style="left:261px;top:246px;width:72px;background:#c9bfbf;">08Feb2016</div>
<div class="c" style="left:333px;top:246px;width:41px;background:#c9bfbf;">1120</div>
<div class="c" style="left:374px;top:246px;width:68px;background:#c9bfbf;">Invoice</div>
<div class="c" style="left:442px;top:246px;width:45px;background:#c9bfbf;"></div>
<div class="c" style="left:487px;top:246px;width:43px;background:#c9bfbf;"></div>
<div class="c" style="left:530px;top:246px;width:76px;background:#c9bfbf;font-size:11.8px;">SCHWARTZ</div>
<div class="c" style="left:606px;top:246px;width:192px;background:#c9bfbf;">Schwartz's</div>
<div class="c" style="left:798px;top:246px;width:46px;background:#c9bfbf;"></div>
<div class="c" style="left:844px;top:246px;width:54px;background:#c9bfbf;"></div>
<div class="c" style="left:898px;top:246px;width:70px;background:#c9bfbf;text-align:right;padding-right:6px;">10,089.00</div>
<div class="c" style="left:968px;top:246px;width:1px;background:#c9bfbf;border-left:0;border-right:0;"></div>
<div class="c" style="left:225px;top:265px;width:36px;background:#ffeeee;">21</div>
<div class="c" style="left:261px;top:265px;width:72px;background:#c9bfbf;">14Feb2016</div>
<div class="c" style="left:333px;top:265px;width:41px;background:#c9bfbf;">1121</div>
<div class="c" style="left:374px;top:265px;width:68px;background:#c9bfbf;">Invoice</div>
<div class="c" style="left:442px;top:265px;width:45px;background:#c9bfbf;"></div>
<div class="c" style="left:487px;top:265px;width:43px;background:#c9bfbf;"></div>
<div class="c" style="left:530px;top:265px;width:76px;background:#c9bfbf;font-size:11.8px;">WATSON</div>
<div class="c" style="left:606px;top:265px;width:192px;background:#c9bfbf;">Watson's Accounting Services</div>
<div class="c" style="left:798px;top:265px;width:46px;background:#c9bfbf;"></div>
<div class="c" style="left:844px;top:265px;width:54px;background:#c9bfbf;"></div>
<div class="c" style="left:898px;top:265px;width:70px;background:#c9bfbf;text-align:right;padding-right:6px;">3,950.00</div>
<div class="c" style="left:968px;top:265px;width:1px;background:#c9bfbf;border-left:0;border-right:0;"></div>
<div class="c" style="left:225px;top:284px;width:36px;background:#ffeeee;">22</div>
<div class="c" style="left:261px;top:284px;width:72px;background:#c9bfbf;">15Feb2016</div>
<div class="c" style="left:333px;top:284px;width:41px;background:#c9bfbf;">1122</div>
<div class="c" style="left:374px;top:284px;width:68px;background:#c9bfbf;">Invoice</div>
<div class="c" style="left:442px;top:284px;width:45px;background:#c9bfbf;"></div>
<div class="c" style="left:487px;top:284px;width:43px;background:#c9bfbf;"></div>
<div class="c" style="left:530px;top:284px;width:76px;background:#c9bfbf;font-size:11.8px;">NATIONAL</div>
<div class="c" style="left:606px;top:284px;width:192px;background:#c9bfbf;">National Housing Co-Op Assoc.</div>
<div class="c" style="left:798px;top:284px;width:46px;background:#c9bfbf;"></div>
<div class="c" style="left:844px;top:284px;width:54px;background:#c9bfbf;"></div>
<div class="c" style="left:898px;top:284px;width:70px;background:#c9bfbf;text-align:right;padding-right:6px;">2,677.50</div>
<div class="c" style="left:968px;top:284px;width:1px;background:#c9bfbf;border-left:0;border-right:0;"></div>
<div class="c" style="left:225px;top:303px;width:36px;background:#ffeeee;">23</div>
<div class="c" style="left:261px;top:303px;width:72px;background:#c9bfbf;">17Feb2016</div>
<div class="c" style="left:333px;top:303px;width:41px;background:#c9bfbf;">1123</div>
<div class="c" style="left:374px;top:303px;width:68px;background:#c9bfbf;">Invoice</div>
<div class="c" style="left:442px;top:303px;width:45px;background:#c9bfbf;"></div>
<div class="c" style="left:487px;top:303px;width:43px;background:#c9bfbf;"></div>
<div class="c" style="left:530px;top:303px;width:76px;background:#c9bfbf;font-size:11.8px;">AHEAD</div>
<div class="c" style="left:606px;top:303px;width:192px;background:#c9bfbf;">Ahead Computer Consultants</div>
<div class="c" style="left:798px;top:303px;width:46px;background:#c9bfbf;"></div>
<div class="c" style="left:844px;top:303px;width:54px;background:#c9bfbf;"></div>
<div class="c" style="left:898px;top:303px;width:70px;background:#c9bfbf;text-align:right;padding-right:6px;">1,639.00</div>
<div class="c" style="left:968px;top:303px;width:1px;background:#c9bfbf;border-left:0;border-right:0;"></div>
<div class="c" style="left:225px;top:322px;width:36px;background:#ffeeee;">24</div>
<div class="c" style="left:261px;top:322px;width:72px;background:#c9bfbf;">18Feb2016</div>
<div class="c" style="left:333px;top:322px;width:41px;background:#c9bfbf;">1124</div>
<div class="c" style="left:374px;top:322px;width:68px;background:#c9bfbf;">Invoice</div>
<div class="c" style="left:442px;top:322px;width:45px;background:#c9bfbf;"></div>
<div class="c" style="left:487px;top:322px;width:43px;background:#c9bfbf;"></div>
<div class="c" style="left:530px;top:322px;width:76px;background:#c9bfbf;font-size:11.8px;">SENIORS</div>
<div class="c" style="left:606px;top:322px;width:192px;background:#c9bfbf;">Seniors' Retirement Homes</div>
<div class="c" style="left:798px;top:322px;width:46px;background:#c9bfbf;"></div>
<div class="c" style="left:844px;top:322px;width:54px;background:#c9bfbf;"></div>
<div class="c" style="left:898px;top:322px;width:70px;background:#c9bfbf;text-align:right;padding-right:6px;">3,265.00</div>
<div class="c" style="left:968px;top:322px;width:1px;background:#c9bfbf;border-left:0;border-right:0;"></div>
<div class="c" style="left:225px;top:341px;width:36px;background:#ffeeee;">25</div>
<div class="c" style="left:261px;top:341px;width:72px;background:#c9bfbf;">19Feb2016</div>
<div class="c" style="left:333px;top:341px;width:41px;background:#c9bfbf;">1125</div>
<div class="c" style="left:374px;top:341px;width:68px;background:#c9bfbf;">Invoice</div>
<div class="c" style="left:442px;top:341px;width:45px;background:#c9bfbf;"></div>
<div class="c" style="left:487px;top:341px;width:43px;background:#c9bfbf;"></div>
<div class="c" style="left:530px;top:341px;width:76px;background:#c9bfbf;font-size:11.8px;">WATSON</div>
<div class="c" style="left:606px;top:341px;width:192px;background:#c9bfbf;">Watson's Accounting Services</div>
<div class="c" style="left:798px;top:341px;width:46px;background:#c9bfbf;"></div>
<div class="c" style="left:844px;top:341px;width:54px;background:#c9bfbf;"></div>
<div class="c" style="left:898px;top:341px;width:70px;background:#c9bfbf;text-align:right;padding-right:6px;">18,820.00</div>
<div class="c" style="left:968px;top:341px;width:1px;background:#c9bfbf;border-left:0;border-right:0;"></div>
<div class="c" style="left:225px;top:360px;width:36px;background:#ffeeee;">26</div>
<div class="c" style="left:261px;top:360px;width:72px;background:#c9bfbf;">25Feb2016</div>
<div class="c" style="left:333px;top:360px;width:41px;background:#c9bfbf;">1126</div>
<div class="c" style="left:374px;top:360px;width:68px;background:#c9bfbf;">Invoice</div>
<div class="c" style="left:442px;top:360px;width:45px;background:#c9bfbf;"></div>
<div class="c" style="left:487px;top:360px;width:43px;background:#c9bfbf;"></div>
<div class="c" style="left:530px;top:360px;width:76px;background:#c9bfbf;font-size:11.8px;">MONEY</div>
<div class="c" style="left:606px;top:360px;width:192px;background:#c9bfbf;">MoneyPenny's Bookkeeping Serv.</div>
<div class="c" style="left:798px;top:360px;width:46px;background:#c9bfbf;"></div>
<div class="c" style="left:844px;top:360px;width:54px;background:#c9bfbf;"></div>
<div class="c" style="left:898px;top:360px;width:70px;background:#c9bfbf;text-align:right;padding-right:6px;">2,300.00</div>
<div class="c" style="left:968px;top:360px;width:1px;background:#c9bfbf;border-left:0;border-right:0;"></div>
<div class="c" style="left:225px;top:379px;width:36px;background:#ffeeee;">27</div>
<div class="c" style="left:261px;top:379px;width:72px;background:#c9bfbf;">26Feb2016</div>
<div class="c" style="left:333px;top:379px;width:41px;background:#c9bfbf;">1127</div>
<div class="c" style="left:374px;top:379px;width:68px;background:#c9bfbf;">Invoice</div>
<div class="c" style="left:442px;top:379px;width:45px;background:#c9bfbf;"></div>
<div class="c" style="left:487px;top:379px;width:43px;background:#c9bfbf;"></div>
<div class="c" style="left:530px;top:379px;width:76px;background:#c9bfbf;font-size:11.8px;">AHEAD</div>
<div class="c" style="left:606px;top:379px;width:192px;background:#c9bfbf;">Ahead Computer Consultants</div>
<div class="c" style="left:798px;top:379px;width:46px;background:#c9bfbf;"></div>
<div class="c" style="left:844px;top:379px;width:54px;background:#c9bfbf;"></div>
<div class="c" style="left:898px;top:379px;width:70px;background:#c9bfbf;text-align:right;padding-right:6px;">3,850.00</div>
<div class="c" style="left:968px;top:379px;width:1px;background:#c9bfbf;border-left:0;border-right:0;"></div>
<div class="c" style="left:225px;top:398px;width:36px;background:#ffeeee;">28</div>
<div class="c" style="left:261px;top:398px;width:72px;background:#c9bfbf;">26Feb2016</div>
<div class="c" style="left:333px;top:398px;width:41px;background:#c9bfbf;">1128</div>
<div class="c" style="left:374px;top:398px;width:68px;background:#c9bfbf;">Invoice</div>
<div class="c" style="left:442px;top:398px;width:45px;background:#c9bfbf;"></div>
<div class="c" style="left:487px;top:398px;width:43px;background:#c9bfbf;"></div>
<div class="c" style="left:530px;top:398px;width:76px;background:#c9bfbf;font-size:11.8px;">LINEAR</div>
<div class="c" style="left:606px;top:398px;width:192px;background:#c9bfbf;">Linear Electronics</div>
<div class="c" style="left:798px;top:398px;width:46px;background:#c9bfbf;"></div>
<div class="c" style="left:844px;top:398px;width:54px;background:#c9bfbf;"></div>
<div class="c" style="left:898px;top:398px;width:70px;background:#c9bfbf;text-align:right;padding-right:6px;">2,587.50</div>
<div class="c" style="left:968px;top:398px;width:1px;background:#c9bfbf;border-left:0;border-right:0;"></div>
<div class="c" style="left:225px;top:417px;width:36px;background:#ffeeee;">29</div>
<div class="c" style="left:261px;top:417px;width:72px;background:#c9bfbf;">27Feb2016</div>
<div class="c" style="left:333px;top:417px;width:41px;background:#c9bfbf;">1129</div>
<div class="c" style="left:374px;top:417px;width:68px;background:#c9bfbf;">Invoice</div>
<div class="c" style="left:442px;top:417px;width:45px;background:#c9bfbf;"></div>
<div class="c" style="left:487px;top:417px;width:43px;background:#c9bfbf;"></div>
<div class="c" style="left:530px;top:417px;width:76px;background:#c9bfbf;font-size:11.8px;">RWM</div>
<div class="c" style="left:606px;top:417px;width:192px;background:#c9bfbf;">Regional Waste Management</div>
<div class="c" style="left:798px;top:417px;width:46px;background:#c9bfbf;"></div>
<div class="c" style="left:844px;top:417px;width:54px;background:#c9bfbf;"></div>
<div class="c" style="left:898px;top:417px;width:70px;background:#c9bfbf;text-align:right;padding-right:6px;">7,146.00</div>
<div class="c" style="left:968px;top:417px;width:1px;background:#c9bfbf;border-left:0;border-right:0;"></div>
<div class="c" style="left:225px;top:436px;width:36px;background:#ffeeee;">30</div>
<div class="c" style="left:261px;top:436px;width:72px;background:#c9bfbf;">28Feb2016</div>
<div class="c" style="left:333px;top:436px;width:41px;background:#c9bfbf;">1130</div>
<div class="c" style="left:374px;top:436px;width:68px;background:#c9bfbf;">Invoice</div>
<div class="c" style="left:442px;top:436px;width:45px;background:#c9bfbf;"></div>
<div class="c" style="left:487px;top:436px;width:43px;background:#c9bfbf;"></div>
<div class="c" style="left:530px;top:436px;width:76px;background:#c9bfbf;font-size:11.8px;">MAJOR</div>
<div class="c" style="left:606px;top:436px;width:192px;background:#c9bfbf;">Major Business Schools</div>
<div class="c" style="left:798px;top:436px;width:46px;background:#c9bfbf;"></div>
<div class="c" style="left:844px;top:436px;width:54px;background:#c9bfbf;"></div>
<div class="c" style="left:898px;top:436px;width:70px;background:#c9bfbf;text-align:right;padding-right:6px;">12,175.00</div>
<div class="c" style="left:968px;top:436px;width:1px;background:#c9bfbf;border-left:0;border-right:0;"></div>
<div class="c" style="left:225px;top:455px;width:36px;background:#ffeeee;">31</div>
<div class="c" style="left:261px;top:455px;width:72px;background:#c9bfbf;">28Feb2016</div>
<div class="c" style="left:333px;top:455px;width:41px;background:#c9bfbf;">1131</div>
<div class="c" style="left:374px;top:455px;width:68px;background:#c9bfbf;">Invoice</div>
<div class="c" style="left:442px;top:455px;width:45px;background:#c9bfbf;"></div>
<div class="c" style="left:487px;top:455px;width:43px;background:#c9bfbf;"></div>
<div class="c" style="left:530px;top:455px;width:76px;background:#c9bfbf;font-size:11.8px;">WOOD</div>
<div class="c" style="left:606px;top:455px;width:192px;background:#c9bfbf;">Woodward &amp; Bernstein Adv.</div>
<div class="c" style="left:798px;top:455px;width:46px;background:#c9bfbf;"></div>
<div class="c" style="left:844px;top:455px;width:54px;background:#c9bfbf;"></div>
<div class="c" style="left:898px;top:455px;width:70px;background:#c9bfbf;text-align:right;padding-right:6px;">1,415.00</div>
<div class="c" style="left:968px;top:455px;width:1px;background:#c9bfbf;border-left:0;border-right:0;"></div>
<div class="c" style="left:225px;top:474px;width:36px;background:#ffeeee;">32</div>
<div class="c" style="left:261px;top:474px;width:72px;background:#ffffff;">02Mar2016</div>
<div class="c" style="left:333px;top:474px;width:41px;background:#ffffff;">1132</div>
<div class="c" style="left:374px;top:474px;width:68px;background:#ffffff;">Invoice</div>
<div class="c" style="left:442px;top:474px;width:45px;background:#ffffff;"></div>
<div class="c" style="left:487px;top:474px;width:43px;background:#ffffff;"></div>
<div class="c" style="left:530px;top:474px;width:76px;background:#ffffff;font-size:11.8px;">GOLD</div>
<div class="c" style="left:606px;top:474px;width:192px;background:#ffffff;">Gold Bank Emp. Pension Fund</div>
<div class="c" style="left:798px;top:474px;width:46px;background:#ffffff;"></div>
<div class="c" style="left:844px;top:474px;width:54px;background:#ffffff;"></div>
<div class="c" style="left:898px;top:474px;width:70px;background:#ffffff;text-align:right;padding-right:6px;">5,756.00</div>
<div class="c" style="left:968px;top:474px;width:1px;background:#ffffff;border-left:0;border-right:0;"></div>
<div class="c" style="left:225px;top:493px;width:36px;background:#ffeeee;">33</div>
<div class="c" style="left:261px;top:493px;width:72px;background:#ffeeee;">04Mar2016</div>
<div class="c" style="left:333px;top:493px;width:41px;background:#ffeeee;">1133</div>
<div class="c" style="left:374px;top:493px;width:68px;background:#ffeeee;">Invoice</div>
<div class="c" style="left:442px;top:493px;width:45px;background:#ffeeee;"></div>
<div class="c" style="left:487px;top:493px;width:43px;background:#ffeeee;"></div>
<div class="c" style="left:530px;top:493px;width:76px;background:#ffeeee;font-size:11.8px;">OLSON</div>
<div class="c" style="left:606px;top:493px;width:192px;background:#ffeeee;">Olson Valley Conservation Grp</div>
<div class="c" style="left:798px;top:493px;width:46px;background:#ffeeee;"></div>
<div class="c" style="left:844px;top:493px;width:54px;background:#ffeeee;"></div>
<div class="c" style="left:898px;top:493px;width:70px;background:#ffeeee;text-align:right;padding-right:6px;">4,366.00</div>
<div class="c" style="left:968px;top:493px;width:1px;background:#ffeeee;border-left:0;border-right:0;"></div>
<div class="a" style="left:225px;top:512px;width:744px;height:1px;background:#877f7f;"></div>
<div class="a" style="left:467px;top:46px;width:151px;height:158px;box-sizing:border-box;background:#f2f2f2;border:1px solid #a8a8a8;box-shadow:3px 4px 2px rgba(0,0,0,0.42);z-index:20"></div>
<div class="a" style="left:490px;top:51px;font-size:12px;line-height:16px;letter-spacing:0.014px;z-index:21;"><u>A</u>ll</div>
<div class="a" style="left:490px;top:70px;font-size:12px;line-height:16px;letter-spacing:-0.272px;z-index:21;"><u>B</u>lock</div>
<div class="a" style="left:490px;top:89px;font-size:12px;line-height:16px;letter-spacing:0.028px;z-index:21;"><u>N</u>otes</div>
<div class="a" style="left:490px;top:108px;font-size:12px;line-height:16px;letter-spacing:-0.129px;z-index:21;"><u>I</u>nvoices</div>
<div class="a" style="left:490px;top:127px;font-size:12px;line-height:16px;letter-spacing:-0.339px;z-index:21;"><u>C</u>hecks</div>
<div class="a" style="left:490px;top:146px;font-size:12px;line-height:16px;letter-spacing:-1.166px;z-index:21;">A<u>P</u></div>
<div class="a" style="left:508.9px;top:146px;font-size:12px;line-height:16px;letter-spacing:-0.486px;z-index:21;">Checks</div>
<div class="a" style="left:490px;top:165px;font-size:12px;line-height:16px;letter-spacing:0.052px;z-index:21;"><u>D</u>etail</div>
<div class="a" style="left:524.1px;top:165px;font-size:12px;line-height:16px;letter-spacing:-0.155px;z-index:21;">Windows</div>
<div class="a" style="left:467px;top:179px;width:152px;height:25px;box-sizing:border-box;border:3px solid #e5473f;background:#3399ff;z-index:22"></div>
<div class="a" style="left:490.3px;top:184px;font-size:12px;line-height:16px;letter-spacing:-0.308px;color:#fff;z-index:23;">Journal</div>
<div class="a" style="left:530.2px;top:184px;font-size:12px;line-height:16px;letter-spacing:-0.039px;color:#fff;z-index:23;"><u>T</u>ransactions</div>
</body></html>
